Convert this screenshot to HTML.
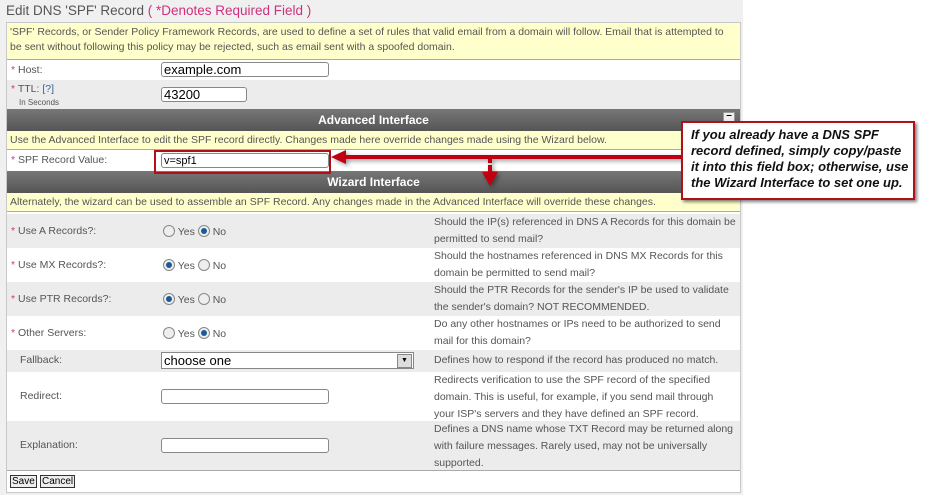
<!DOCTYPE html>
<html><head><style>
body{margin:0;width:926px;height:495px;background:#fff;font-family:"Liberation Sans",sans-serif;position:relative;overflow:hidden;color:#555;font-size:10.5px}
.bg{position:absolute;left:0;top:0;width:743px;height:495px;background:#f0f0f0}
.t{position:absolute;left:6px;top:3px;font-size:13.5px;color:#555}
.t span{color:#d0307f}
.panel{position:absolute;left:6px;top:22px;width:733px;height:469px;border:1px solid #c8c8c8;background:#fff}
.r{position:absolute;left:0;width:733px}
.y{background:#ffffcc;border-bottom:1px solid #aaa}
.g{background:#ececec}
.h{background:linear-gradient(#777,#555);color:#fff;font-weight:bold;font-size:12px;text-align:center;line-height:22px;height:22px}
.a{position:absolute}
.s{color:#c0407f}
input.i{position:absolute;height:13px;border:1px solid #888;border-radius:3px;background:#fff;font-size:13px;padding:0 2px;color:#000;font-family:"Liberation Sans",sans-serif}
.rad{display:inline-block;width:10px;height:10px;border:1px solid #888;border-radius:50%;background:#eee;vertical-align:-2px;position:relative}
.rad.on::after{content:"";position:absolute;left:2px;top:2px;width:6px;height:6px;border-radius:50%;background:#1a5a9a}
.d{position:absolute;left:427px;line-height:17px;width:302px}
</style></head><body>
<div class="bg"></div>
<div class="t">Edit DNS 'SPF' Record <span>( *Denotes Required Field )</span></div>
<div class="panel">
 <div class="r y" style="top:0;height:34px;padding:0 3px;line-height:15px;padding-top:2px;width:727px">'SPF' Records, or Sender Policy Framework Records, are used to define a set of rules that valid email from a domain will follow. Email that is attempted to be sent without following this policy may be rejected, such as email sent with a spoofed domain.</div>
 <div class="r" style="top:37px;height:20px"><span class="a" style="left:4px;top:4px"><span class="s">*</span> Host:</span></div>
 <div class="r g" style="top:57px;height:29px"><span class="a" style="left:4px;top:3px"><span class="s">*</span> TTL: <span style="color:#369">[?]</span></span><span class="a" style="left:12px;top:18px;font-size:8px">In Seconds</span></div>
 <div class="r h" style="top:86px">Advanced Interface<span class="a" style="left:716px;top:3px;width:10px;height:9px;background:#eee;border:1px solid #999;line-height:6px;color:#000;font-size:10px">–</span></div>
 <div class="r y" style="top:108px;height:18px;line-height:18px;padding-left:3px;width:730px">Use the Advanced Interface to edit the SPF record directly. Changes made here override changes made using the Wizard below.</div>
 <div class="r" style="top:127px;height:21px"><span class="a" style="left:4px;top:4px"><span class="s">*</span> SPF Record Value:</span></div>
 <div class="r h" style="top:148px">Wizard Interface</div>
 <div class="r y" style="top:170px;height:18px;line-height:18px;padding-left:3px;width:730px">Alternately, the wizard can be used to assemble an SPF Record. Any changes made in the Advanced Interface will override these changes.</div>
 <div class="r g" style="top:191px;height:34px"><span class="a" style="left:4px;top:11px"><span class="s">*</span> Use A Records?:</span><span class="a" style="left:156px;top:11px"><span class="rad"></span> Yes <span class="rad on"></span> No</span><span class="d" style="top:0">Should the IP(s) referenced in DNS A Records for this domain be permitted to send mail?</span></div>
 <div class="r" style="top:225px;height:34px"><span class="a" style="left:4px;top:11px"><span class="s">*</span> Use MX Records?:</span><span class="a" style="left:156px;top:11px"><span class="rad on"></span> Yes <span class="rad"></span> No</span><span class="d" style="top:0">Should the hostnames referenced in DNS MX Records for this domain be permitted to send mail?</span></div>
 <div class="r g" style="top:259px;height:34px"><span class="a" style="left:4px;top:11px"><span class="s">*</span> Use PTR Records?:</span><span class="a" style="left:156px;top:11px"><span class="rad on"></span> Yes <span class="rad"></span> No</span><span class="d" style="top:0">Should the PTR Records for the sender's IP be used to validate the sender's domain? NOT RECOMMENDED.</span></div>
 <div class="r" style="top:293px;height:34px"><span class="a" style="left:4px;top:11px"><span class="s">*</span> Other Servers:</span><span class="a" style="left:156px;top:11px"><span class="rad"></span> Yes <span class="rad on"></span> No</span><span class="d" style="top:0">Do any other hostnames or IPs need to be authorized to send mail for this domain?</span></div>
 <div class="r g" style="top:327px;height:22px"><span class="a" style="left:13px;top:4px">Fallback:</span><span class="d" style="top:2px">Defines how to respond if the record has produced no match.</span></div>
 <div class="r" style="top:349px;height:49px"><span class="a" style="left:13px;top:18px">Redirect:</span><span class="d" style="top:0">Redirects verification to use the SPF record of the specified domain. This is useful, for example, if you send mail through your ISP's servers and they have defined an SPF record.</span></div>
 <div class="r g" style="top:398px;height:49px;border-bottom:1px solid #aaa"><span class="a" style="left:13px;top:18px">Explanation:</span><span class="d" style="top:0">Defines a DNS name whose TXT Record may be returned along with failure messages. Rarely used, may not be universally supported.</span></div>
 <span class="a" style="left:3px;top:452px;border:1px solid #333;padding:0 1px;color:#000;font-size:10px;background:#eee">Save</span>
 <span class="a" style="left:33px;top:452px;border:1px solid #333;padding:0 1px;color:#000;font-size:10px;background:#eee">Cancel</span>
</div>
<input class="i" style="left:161px;top:62px;width:162px" value="example.com">
<input class="i" style="left:161px;top:87px;width:80px" value="43200">
<input class="i" style="left:161px;top:153px;width:162px;font-size:11px" value="v=spf1">
<div class="a" style="left:161px;top:352px;width:249px;height:15px;border:1px solid #888;background:#fff;font-size:13px;color:#000;line-height:15px;padding-left:2px">choose one<span class="a" style="right:1px;top:1px;width:13px;height:12px;background:#ddd;border:1px solid #888;font-size:7px;text-align:center;line-height:12px">▼</span></div>
<input class="i" style="left:161px;top:389px;width:162px">
<input class="i" style="left:161px;top:438px;width:162px">
<div class="a" style="left:154px;top:150px;width:173px;height:20px;border:2px solid #b01018"></div>
<svg class="a" style="left:0;top:0" width="926" height="495">
<g fill="#c00010" style="filter:drop-shadow(2px 2px 2px rgba(0,0,0,.4))">
<rect x="344" y="155" width="338" height="4"/>
<polygon points="331,157 346,150 346,164"/>
<rect x="488" y="157" width="4" height="6"/><rect x="488" y="165" width="4" height="8"/>
<polygon points="482,172 498,172 490,186"/>
</g>
</svg>
<div class="a" style="left:681px;top:121px;width:222px;height:71px;border:2px solid #b01018;background:#fff;box-shadow:2px 2px 3px rgba(0,0,0,.5);font-style:italic;font-weight:bold;color:#111;font-size:13px;line-height:16px;padding:4px 0 0 8px;white-space:nowrap">If you already have a DNS SPF<br>record defined, simply copy/paste<br>it into this field box; otherwise, use<br>the Wizard Interface to set one up.</div>
</body></html>
